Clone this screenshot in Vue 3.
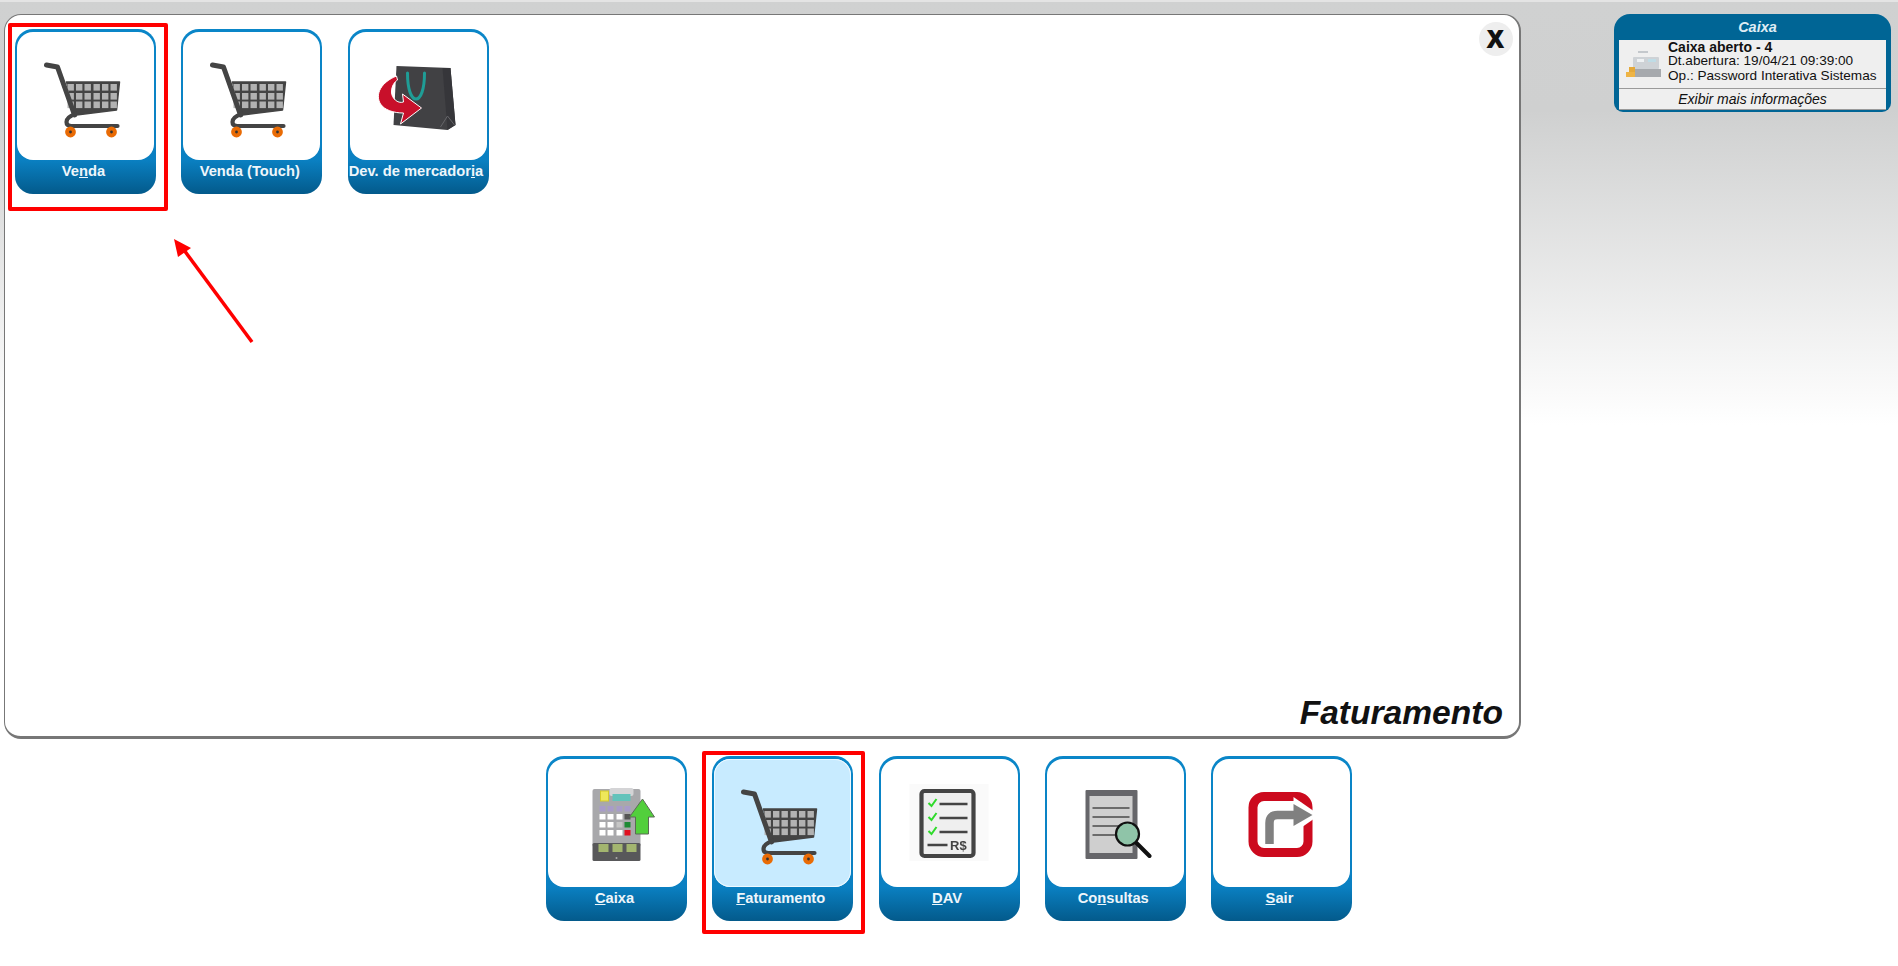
<script setup>
const panelItems = [
  { id: 'venda', before: 'Ve', key: 'n', after: 'da', icon: 'cart' },
  { id: 'touch', before: 'Venda (Touch)', key: '', after: '', icon: 'cart' },
  { id: 'dev', before: 'Dev. de mercador', key: 'i', after: 'a', icon: 'bag' }
]

const dockItems = [
  { id: 'caixa', before: '', key: 'C', after: 'aixa', icon: 'till' },
  { id: 'fat', before: '', key: 'F', after: 'aturamento', icon: 'cart', active: true },
  { id: 'dav', before: '', key: 'D', after: 'AV', icon: 'dav' },
  { id: 'cons', before: 'Co', key: 'n', after: 'sultas', icon: 'search' },
  { id: 'sair', before: '', key: 'S', after: 'air', icon: 'exit' }
]

const cellXs = [47, 55.500, 64, 73, 81.500, 90]
const cellYs = [43, 52, 60.500]
const keyXs = [53, 61, 70, 78]
</script>

<template>
  <div class="page">
    <svg class="defs" width="0" height="0">
      <defs>
        <g id="ic-cart">
          <g transform="translate(5 11)">
            <path d="M46 41 L99 41 L96 69 L56 74 Z" fill="#444" stroke="#444" stroke-width="1.500" stroke-linejoin="round" />
            <template v-for="y in cellYs" :key="y">
              <rect v-for="x in cellXs" :key="x" :x="x" :y="y" width="6.400" height="6.600" fill="#b2b2b2" />
            </template>
            <path d="M26 24 L37 26 L54 74" fill="none" stroke="#444" stroke-width="5" stroke-linecap="round" stroke-linejoin="round" />
            <path d="M55 73 Q46 76 46 81 Q46 85 51 85 L97 85" fill="none" stroke="#444" stroke-width="4.200" stroke-linecap="round" />
            <circle cx="50" cy="91" r="5.400" fill="#e96b05" />
            <circle cx="50" cy="91" r="1.400" fill="#333" />
            <circle cx="91" cy="91" r="5.400" fill="#e96b05" />
            <circle cx="91" cy="91" r="1.400" fill="#333" />
          </g>
        </g>
        <g id="ic-bag">
          <path d="M49 36 L103 38 L108 95 L100 100 L46 95 Z" fill="#414144" />
          <path d="M95 38 L100 100 L108 95 L103 38 Z" fill="#36363a" />
          <path d="M93 97 L100 86 L107 95" fill="none" stroke="#66666a" stroke-width="1" />
          <path d="M60 43 C60 60 64 69 68.500 69 C73 69 77 60 77 43" fill="none" stroke="#1f9d96" stroke-width="3" stroke-linecap="round" />
          <path d="M49 46 C34 52 27 64 33 74 C37 80 46 83 56 83 L53 94 L74 78 L55 64 L56 72 C50 74 44 68 44 62 C44 56 47 52 50 50 Z" fill="#c8102a" stroke="#fff" stroke-width="1" />
        </g>
        <g id="ic-till">
          <rect x="46" y="32" width="48" height="58" rx="2" fill="#a8a8ab" />
          <rect x="63" y="31" width="24" height="8" rx="2" fill="#d4d4d6" />
          <rect x="54" y="34" width="8" height="10" fill="#eee75a" stroke="#d3c92c" />
          <rect x="66" y="37" width="18" height="7" fill="#63c3bb" />
          <template v-for="(x, i) in keyXs" :key="x">
            <rect :x="x" y="49" width="6" height="5.500" fill="#a79cc9" />
            <rect :x="x" y="57" width="6" height="5.500" :fill="i === 3 ? '#555' : '#fff'" />
            <rect :x="x" y="65" width="6" height="5.500" :fill="i === 3 ? '#1d8a35' : i === 2 ? '#c6c6c6' : '#fff'" />
            <rect :x="x" y="73" width="6" height="5.500" :fill="i === 3 ? '#e01020' : '#fff'" />
          </template>
          <rect x="46" y="86" width="48" height="18" rx="1.500" fill="#58585a" />
          <rect x="52" y="87" width="10" height="8" fill="#a3b56f" />
          <rect x="66" y="87" width="10" height="8" fill="#a3b56f" />
          <rect x="80" y="87" width="10" height="8" fill="#a3b56f" />
          <circle cx="70" cy="101" r="1" fill="#aaa" />
          <path d="M96 42 L108 60 L102 60 L102 77 L89 77 L89 60 L83 60 Z" fill="#52cf3c" stroke="#5b6b55" stroke-width="1" />
        </g>
        <g id="ic-dav">
          <rect x="31" y="27" width="79" height="77" fill="#fafafa" />
          <rect x="43" y="34" width="52" height="65" rx="3" fill="#efefef" stroke="#444" stroke-width="4.200" />
          <path d="M50 46 L53 49 L58 42 M50 60 L53 63 L58 56 M50 74 L53 77 L58 70" fill="none" stroke="#2edb2a" stroke-width="2" />
          <path d="M61 47 H89 M61 61 H89 M61 75 H89 M49 88 H69" fill="none" stroke="#444" stroke-width="2.600" />
          <text x="71.500" y="92.500" class="rs">R$</text>
        </g>
        <g id="ic-search">
          <rect x="41" y="33" width="52" height="69" rx="1" fill="#66666a" />
          <rect x="45" y="39" width="43" height="57" fill="#cfcfcf" />
          <path d="M48 51 H85 M48 60 H85 M48 69 H85 M48 78 H72" stroke="#6b6b6b" stroke-width="2" fill="none" />
          <path d="M92 86 L105 99" stroke="#111" stroke-width="4" stroke-linecap="round" />
          <circle cx="83" cy="77" r="11.500" fill="#8fc4a8" stroke="#111" stroke-width="2.200" />
        </g>
        <g id="ic-exit">
          <rect x="41.500" y="39.500" width="55" height="56" rx="11" fill="none" stroke="#cc0a1e" stroke-width="9" />
          <path d="M82 40 L108 58 L82 76 Z" fill="#fff" />
          <path d="M58 87 V66 Q58 58 66 58 H84" fill="none" stroke="#808080" stroke-width="8.500" />
          <path d="M82 47 L101 58 L82 69 Z" fill="#808080" />
        </g>
      </defs>
    </svg>

    <div class="top">
      <section class="panel">
        <div class="close"><span>X</span></div>
        <div class="tiles">
          <div v-for="item in panelItems" :key="item.id" class="tile">
            <div class="face">
              <svg width="100" height="100" viewBox="20.500 16 100 100"><use :href="'#ic-' + item.icon" /></svg>
            </div>
            <div class="label">{{ item.before }}<u>{{ item.key }}</u>{{ item.after }}</div>
            <div v-if="item.id === 'venda'" class="mark mark-venda"></div>
          </div>
        </div>
        <div class="panel-title">Faturamento</div>
      </section>

      <aside class="cash">
        <div class="cash-title">Caixa</div>
        <div class="cash-body">
          <div class="cash-info">
            <svg class="cash-icon" width="36" height="30" viewBox="0 0 36 30">
              <rect x="12" y="2" width="10" height="2" fill="#c4c8cc" />
              <rect x="7" y="8" width="26" height="12" rx="1" fill="#ced2d6" />
              <rect x="11" y="10" width="7" height="3" fill="#eef1f3" />
              <rect x="22" y="10" width="8" height="3" fill="#bfdce6" />
              <rect x="6" y="20" width="29" height="8" fill="#a6a9ad" />
              <rect x="0" y="23" width="9" height="5" fill="#eeb445" />
              <rect x="3" y="18" width="6" height="5" fill="#e5a93a" />
            </svg>
            <div class="cash-lines">
              <strong>Caixa aberto - 4</strong>
              <span>Dt.abertura: 19/04/21 09:39:00</span>
              <span>Op.: Password Interativa Sistemas</span>
            </div>
          </div>
          <div class="cash-more">Exibir mais informações</div>
        </div>
      </aside>
    </div>

    <nav class="dock">
      <div v-for="item in dockItems" :key="item.id" class="tile" :class="{ active: item.active }">
        <div class="face">
          <svg width="100" height="100" viewBox="20.500 16 100 100"><use :href="'#ic-' + item.icon" /></svg>
        </div>
        <div class="label">{{ item.before }}<u>{{ item.key }}</u>{{ item.after }}</div>
        <div v-if="item.active" class="mark mark-fat"></div>
      </div>
    </nav>

    <svg class="arrow" width="100" height="120" viewBox="0 0 100 120">
      <path d="M86 106 L15 10" stroke="#f00" stroke-width="3.500" fill="none" />
      <path d="M8 3 L25 12 L12 21 Z" fill="#f00" />
    </svg>
  </div>
</template>

<style>
html,
body {
  background: linear-gradient(#d0d1d1 0, #cfd0d0 110px, #ffffff 425px) no-repeat;
  background-color: #fff;
}
</style>

<style scoped>
.page {
  position: relative;
  height: 966px;
  overflow: hidden;
  border-top: 2px solid #e4e4e4;
  box-sizing: border-box;
  font-family: "Liberation Sans", Arial, sans-serif;
}

.defs {
  position: absolute;
}

.rs {
  font: bold 13px "Liberation Sans", Arial, sans-serif;
  fill: #444;
}

.top {
  display: flex;
  align-items: flex-start;
  padding: 12px 7px 0 4px;
  justify-content: space-between;
}

.panel {
  position: relative;
  box-sizing: border-box;
  width: 1517px;
  height: 725px;
  background: #fff;
  border: 1px solid #777;
  border-right-width: 2px;
  border-bottom-width: 3px;
  border-radius: 17px;
  padding: 14px 10px 4px;
  display: flex;
  flex-direction: column;
}

.tiles {
  display: flex;
  gap: 25.250px;
  flex: 1;
  align-items: flex-start;
}

.panel-title {
  align-self: flex-end;
  margin-right: 6px;
  font-size: 33.600px;
  line-height: 38px;
  font-weight: bold;
  font-style: italic;
  color: #111;
}

.close {
  position: absolute;
  top: 7px;
  right: 6px;
  width: 34px;
  height: 34px;
  border-radius: 50%;
  background: #eee;
  display: flex;
  align-items: center;
  justify-content: center;
}

.close span {
  font-size: 25px;
  line-height: 25px;
  font-weight: bold;
  color: #111;
  margin-right: 3px;
  text-shadow: 1.500px 0 0 #111;
}

.tile {
  position: relative;
  box-sizing: border-box;
  width: 141px;
  height: 165px;
  flex: none;
  border-radius: 18px;
  padding: 3px 2px 0;
  background: linear-gradient(#0a86c8 0, #0a80c2 131px, #035a8b 165px);
}

.face {
  height: 128px;
  background: #fff;
  border-radius: 16px;
  display: flex;
  align-items: center;
  justify-content: center;
}

.face svg {
  display: block;
  filter: blur(0.35px);
}

.active .face {
  background: #c8ebff;
  box-shadow: inset 0 0 0 1px #eef9ff;
}

.label {
  margin: 0 0 0 -4px;
  text-align: center;
  font-size: 14.700px;
  line-height: 16px;
  padding-top: 3px;
  font-weight: bold;
  color: #eef6fb;
  white-space: nowrap;
}

.mark {
  position: absolute;
  border: 4px solid #f00;
  border-radius: 2px;
  pointer-events: none;
}

.mark-venda {
  left: -7px;
  top: -6px;
  right: -12px;
  bottom: -17px;
}

.mark-fat {
  left: -10px;
  top: -5px;
  right: -12px;
  bottom: -13px;
}

.cash {
  box-sizing: border-box;
  width: 277px;
  height: 98px;
  background: #006595;
  border-radius: 16px 16px 9px 9px;
  padding: 0 5px 2px;
  display: flex;
  flex-direction: column;
}

.cash-title {
  height: 26px;
  line-height: 27px;
  text-align: center;
  padding-left: 10px;
  font-size: 14.500px;
  font-weight: bold;
  font-style: italic;
  color: #dfecf4;
}

.cash-body {
  flex: 1;
  background: #efefef;
  display: flex;
  flex-direction: column;
  color: #111;
  font-size: 13.600px;
}

.cash-info {
  height: 49px;
  display: flex;
  align-items: center;
  gap: 6px;
  padding-left: 7px;
  box-sizing: border-box;
  border-bottom: 1px solid #9a9a9a;
}

.cash-icon {
  flex: none;
}

.cash-lines {
  display: flex;
  flex-direction: column;
  line-height: 14.500px;
  white-space: nowrap;
  padding-bottom: 5px;
}

.cash-lines strong {
  font-size: 14px;
}

.cash-more {
  flex: 1;
  text-align: center;
  font-style: italic;
  font-size: 14px;
  line-height: 20px;
  border-bottom: 1px solid #9a9a9a;
}

.dock {
  display: flex;
  justify-content: center;
  gap: 25.250px;
  margin-top: 17px;
}

.arrow {
  position: absolute;
  left: 166px;
  top: 234px;
}
</style>
